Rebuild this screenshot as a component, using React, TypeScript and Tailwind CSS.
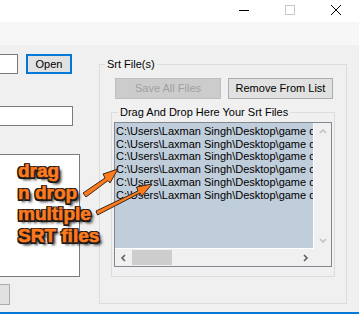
const rows = Array.from({ length: 6 }, () => 'C:\\Users\\Laxman Singh\\Desktop\\game dialogues.srt')

function Chevron({ dir, color }: { dir: 'up' | 'down' | 'left' | 'right'; color: string }) {
  const pts = {
    up: '1,5 4,2 7,5',
    down: '1,2 4,5 7,2',
    left: '5,1 2,4 5,7',
    right: '2,1 5,4 2,7',
  }[dir]
  return (
    <svg width="8" height="8" viewBox="0 0 8 8">
      <polyline points={pts} fill="none" stroke={color} strokeWidth="1.6" />
    </svg>
  )
}

function TitleBar() {
  return (
    <div className="flex h-[22px] justify-end bg-white">
      <div className="flex w-[46px] justify-center pt-[5px]">
        <svg width="10" height="10" viewBox="0 0 10 10">
          <line x1="0" y1="5.5" x2="10" y2="5.5" stroke="#000" strokeWidth="1" />
        </svg>
      </div>
      <div className="flex w-[46px] justify-center pt-[5px]">
        <svg width="10" height="10" viewBox="0 0 10 10">
          <rect x="0.5" y="0.5" width="9" height="9" fill="none" stroke="#c8c8c8" strokeWidth="1" />
        </svg>
      </div>
      <div className="flex w-[46px] justify-center pt-[5px]">
        <svg width="10" height="10" viewBox="0 0 10 10">
          <path d="M0 0 L10 10 M10 0 L0 10" stroke="#000" strokeWidth="1" />
        </svg>
      </div>
    </div>
  )
}

function ListBox() {
  return (
    <div className="ml-[2px] mt-[9px] flex h-[145px] w-[218px] flex-col border border-[#828790] bg-white">
      <div className="flex h-[126px]">
        <div className="w-[199px] overflow-hidden whitespace-nowrap border-r border-b border-white bg-[#c0cddb] pt-[2px] pl-[1px] leading-[12.7px] text-black">
          {rows.map((r, i) => (
            <div key={i}>{r}</div>
          ))}
        </div>
        <div className="flex w-[17px] flex-col justify-between bg-[#f0f0f0]">
          <div className="flex h-[17px] items-center justify-center">
            <Chevron dir="up" color="#c2c2c2" />
          </div>
          <div className="flex h-[17px] items-center justify-center">
            <Chevron dir="down" color="#c2c2c2" />
          </div>
        </div>
      </div>
      <div className="flex h-[17px] bg-[#f0f0f0]">
        <div className="flex w-[199px]">
          <div className="flex w-[17px] items-center justify-center">
            <Chevron dir="left" color="#606060" />
          </div>
          <div className="my-[1px] w-[40px] bg-[#cdcdcd]" />
          <div className="flex-1" />
          <div className="flex w-[17px] items-center justify-center">
            <Chevron dir="right" color="#606060" />
          </div>
        </div>
      </div>
    </div>
  )
}

function SrtGroup() {
  return (
    <div className="relative mt-[19px] h-[240px] w-[248px] border border-[#dcdcdc]">
      <span className="absolute -top-[8px] left-[5px] bg-[#f0f0f0] px-[2px] leading-[14px]">Srt File(s)</span>
      <div className="ml-[15px] mt-[13px] flex gap-[7px]">
        <div className="flex h-[21px] w-[106px] items-center justify-center border border-[#bfbfbf] bg-[#cccccc] text-[#a0a0a0]">
          Save All Files
        </div>
        <div className="flex h-[21px] w-[105px] items-center justify-center border border-[#adadad] bg-[#e1e1e1]">
          Remove From List
        </div>
      </div>
      <div className="relative ml-[11px] mt-[13px] h-[165px] w-[224px] border border-[#dcdcdc]">
        <span className="absolute -top-[8px] left-[6px] bg-[#f0f0f0] px-[2px] leading-[14px]">
          Drag And Drop Here Your Srt Files
        </span>
        <ListBox />
      </div>
    </div>
  )
}

function Annotation() {
  return (
    <div className="pointer-events-none absolute left-0 top-0 h-[314px] w-[359px]">
      <div className="absolute left-[18px] top-[160px] font-['Liberation_Sans'] text-[19px] font-bold leading-[21.5px] text-[#ff7a1c] [-webkit-text-stroke:0.6px_#ff7a1c] [text-shadow:1.5px_1.5px_0_#1a1a1a,-1.5px_-1.5px_0_#1a1a1a,1.5px_-1.5px_0_#1a1a1a,-1.5px_1.5px_0_#1a1a1a,0_1.5px_0_#1a1a1a,1.5px_0_0_#1a1a1a,0_-1.5px_0_#1a1a1a,-1.5px_0_0_#1a1a1a,3px_3px_3px_#000]">
        <div>drag</div>
        <div>n drop</div>
        <div>multiple</div>
        <div>SRT files</div>
      </div>
      <svg className="absolute left-0 top-0" width="359" height="314" viewBox="0 0 359 314">
        <g stroke="#3a2a1a" strokeWidth="1" strokeLinejoin="round" fill="#ff7a1c">
          <polygon points="83,193 105,178 103,174 118,169 110,183 108,180.5 86,197" />
          <polygon points="96,211 138,191 136.5,187 152,184 142,196 140,193 97.5,215" />
        </g>
      </svg>
    </div>
  )
}

export default function App() {
  return (
    <div className="relative h-[314px] w-[359px] overflow-hidden bg-[#f0f0f0] font-['Liberation_Sans',Arial,sans-serif] text-[11px] text-black">
      <TitleBar />
      <div className="h-[23px] bg-[#f7f7f7]" />
      <div className="flex h-[267px]">
        <div className="w-[99px] shrink-0">
          <div className="mt-[9px] flex">
            <div className="-ml-[60px] h-[20px] w-[78px] border border-[#7a7a7a] bg-white" />
            <div className="ml-[8px] flex h-[20px] w-[46px] items-center justify-center border-2 border-[#0078d7] bg-[#e1e1e1]">
              Open
            </div>
          </div>
          <div className="-ml-[40px] mt-[32px] h-[20px] w-[113px] border border-[#7a7a7a] bg-white" />
          <div className="-ml-[40px] mt-[28px] h-[123px] w-[120px] border border-[#7a7a7a] bg-white" />
          <div className="-ml-[40px] mt-[7px] h-[21px] w-[50px] border border-[#adadad] bg-[#e1e1e1]" />
        </div>
        <SrtGroup />
      </div>
      <div className="h-[2px] bg-[#0078d7]" />
      <Annotation />
    </div>
  )
}
